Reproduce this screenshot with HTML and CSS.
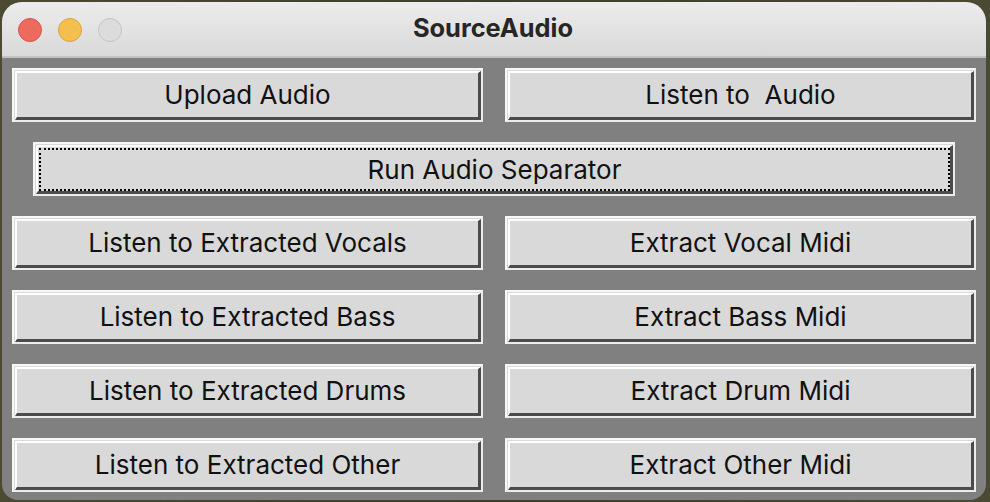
FILE: index.html
```html
<!DOCTYPE html>
<html>
<head>
<meta charset="utf-8">
<link rel="stylesheet" href="styles.css">
</head>
<body>
<div class="window">
  <div class="titlebar">
    <div class="lights">
      <span class="light red"></span>
      <span class="light yellow"></span>
      <span class="light gray"></span>
    </div>
    <div class="title">SourceAudio</div>
  </div>
  <div class="content">
    <div class="btn"><div class="face">Upload Audio</div></div>
    <div class="btn"><div class="face">Listen to&nbsp; Audio</div></div>
    <div class="btn wide"><div class="face focus"><span>Run Audio Separator</span></div></div>
    <div class="btn"><div class="face">Listen to Extracted Vocals</div></div>
    <div class="btn"><div class="face">Extract Vocal Midi</div></div>
    <div class="btn"><div class="face">Listen to Extracted Bass</div></div>
    <div class="btn"><div class="face">Extract Bass Midi</div></div>
    <div class="btn"><div class="face">Listen to Extracted Drums</div></div>
    <div class="btn"><div class="face">Extract Drum Midi</div></div>
    <div class="btn"><div class="face">Listen to Extracted Other</div></div>
    <div class="btn"><div class="face">Extract Other Midi</div></div>
  </div>
</div>
</body>
</html>
```
FILE: styles.css
```css
html, body {
  margin: 0;
  padding: 0;
}
body {
  width: 990px;
  height: 502px;
  overflow: hidden;
  background: linear-gradient(90deg, #4b4a33 0px, #3d3f2c 50%, #4a4932 100%);
  font-family: "Inter", "Liberation Sans", sans-serif;
}
.window {
  margin: 2px 4px 0 2px;
  width: 984px;
  height: 498px;
  border-radius: 20px 20px 16px 16px;
  overflow: hidden;
  background: #808080;
  display: flex;
  flex-direction: column;
}
.titlebar {
  height: 54px;
  flex: none;
  background: linear-gradient(#ececec, #d9d9d9);
  border-bottom: 2px solid #c2c2c2;
  display: flex;
  align-items: center;
  justify-content: center;
  position: relative;
}
.lights {
  position: absolute;
  left: 16px;
  top: 16px;
  display: flex;
  gap: 16px;
}
.light {
  width: 22px;
  height: 22px;
  border-radius: 50%;
  border: 1px solid;
}
.red { background: #ed6a5e; border-color: #d5544a; }
.yellow { background: #f5bf4f; border-color: #d9a33c; }
.gray { background: #dcdcdc; border-color: #c3c3c3; }
.title {
  font-weight: 700;
  font-size: 25.4px;
  color: #262626;
  padding-bottom: 3px;
  padding-right: 2px;
}
.content {
  padding: 10px 10px 8px 10px;
  display: grid;
  grid-template-columns: 471px 471px;
  grid-auto-rows: 54px;
  column-gap: 22px;
  row-gap: 20px;
}
.btn {
  border: 2px solid #f7f7f7;
  border-right-color: #ececec;
  border-bottom-color: #ececec;
  background: #d9d9d9;
  padding: 1px 0 0 1px;
  display: flex;
}
.btn.wide {
  grid-column: 1 / 3;
  margin: 0 21px;
}
.face {
  flex: 1;
  background: #d9d9d9;
  border-top: 2px solid #ffffff;
  border-left: 2px solid #ffffff;
  border-right: 3px solid #4b4b4b;
  border-bottom: 3px solid #4b4b4b;
  display: flex;
  align-items: center;
  justify-content: center;
  font-size: 26px;
  color: #111;
  padding-bottom: 1px;
}
.face.focus {
  padding: 1px 0 0 1px;
}
.face.focus span {
  flex: 1;
  align-self: stretch;
  border: 2px dotted #000;
  display: flex;
  align-items: center;
  justify-content: center;
}
```
